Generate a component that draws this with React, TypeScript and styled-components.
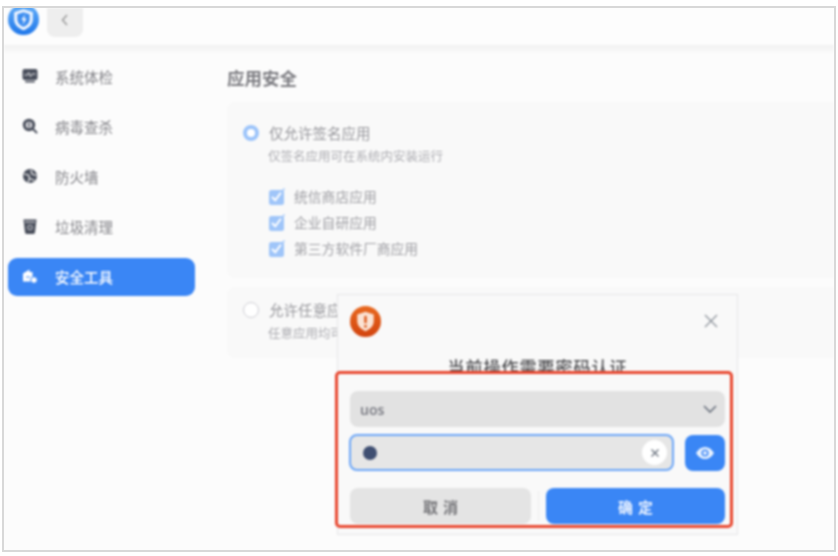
import React from "react";
import styled, { createGlobalStyle } from "styled-components";

const Global = createGlobalStyle`
  html, body { margin: 0; padding: 0; background: #fff; }
  body { width: 838px; height: 556px; overflow: hidden; font-family: "Noto Sans CJK SC", "Noto Sans", sans-serif; }
`;
const Page = styled.div`
  width: 838px; height: 556px; padding: 6px 2px 4px 2px; box-sizing: border-box;
`;
const Frame = styled.div`
  height: 100%; border: 2px solid #d8d8d8; box-sizing: border-box; background: #fdfdfd; overflow: hidden;
`;
const Shot = styled.div`
  position: relative; height: 100%; display: flex; flex-direction: column; filter: blur(0.85px);
`;
const TopBar = styled.div`
  height: 37px; flex: none; background: #fdfdfd; display: flex; align-items: flex-start; gap: 8px; padding-left: 4px;
`;
const Logo = styled.div`
  width: 31px; height: 31px; margin-top: -4px; flex: none;
`;
const BackBtn = styled.div`
  width: 36px; height: 29px; border-radius: 0 0 8px 8px; background: #eeeeee;
  display: flex; align-items: center; justify-content: center; padding-bottom: 6px; box-sizing: border-box;
`;
const Body = styled.div`
  flex: 1; display: flex; min-height: 0;
`;
const Side = styled.div`
  width: 201px; flex: none; background: linear-gradient(#f1f1f1 0, #fcfcfc 9px);
  padding: 13px 10px 0 4px; box-sizing: border-box; display: flex; flex-direction: column; gap: 12px;
`;
const Item = styled.div<{ $active?: boolean }>`
  height: 38px; border-radius: 9px; display: flex; align-items: center; padding: 0 0 2px 14px; box-sizing: border-box; gap: 17px;
  background: ${p => (p.$active ? "#3a86f5" : "transparent")};
  color: ${p => (p.$active ? "#ffffff" : "#85858a")};
  font-size: 14.5px; font-weight: ${p => (p.$active ? 500 : 400)};
`;
const Main = styled.div`
  flex: 1; background: linear-gradient(#f1f1f1 0, #fcfcfc 9px); padding: 21px 0 0 22px; min-width: 0;
`;
const Heading = styled.div`
  font-size: 17.500px; font-weight: 700; color: #7d7d82; line-height: 24px; padding-bottom: 2px; margin-bottom: 10px;
`;
const Card = styled.div<{ $h: number; $pad: number }>`
  height: ${p => p.$h}px; background: #f9f9f9; border-radius: 8px 0 0 8px; padding: ${p => p.$pad}px 0 0 16px;
  box-sizing: border-box; margin-bottom: 9px;
`;
const RadioRow = styled.div`
  display: flex; align-items: center; gap: 10px; color: #97979c; font-size: 14.500px; line-height: 20px;
`;
const Radio = styled.span<{ $on?: boolean }>`
  width: 16px; height: 16px; border-radius: 50%; box-sizing: border-box; flex: none; background: #fff;
  border: ${p => (p.$on ? "4px solid #9cc4fa" : "1.5px solid #cfcfd5")};
`;
const Sub = styled.div`
  font-size: 12.500px; color: #adadb2; margin: 5px 0 0 25px; line-height: 16px;
`;
const Checks = styled.div`
  margin: 22px 0 0 26px; display: flex; flex-direction: column; gap: 6px;
`;
const CheckRow = styled.div`
  display: flex; align-items: center; gap: 10px; color: #a0a0a5; font-size: 13.800px; line-height: 20px;
`;
const Box = styled.span`
  width: 16px; height: 17px; flex: none; display: block; margin-right: -1px;
`;
const Dialog = styled.div`
  position: absolute; left: 333px; top: 286px; width: 401px; height: 241px; background: #f9f9f9;
  border: 1px solid #e6e6e8; box-sizing: border-box; padding: 10px 19px 0 12px; display: flex; flex-direction: column;
`;
const DialogTop = styled.div`
  display: flex; justify-content: space-between; align-items: center; height: 32px;
`;
const DialogTitle = styled.div`
  font-size: 17px; font-weight: 500; color: #4f4f52; text-align: center; height: 20px; line-height: 20px;
  margin: 20px 0 0 0; letter-spacing: 1px; padding-left: 7px;
`;
const Highlight = styled.div`
  position: absolute; left: -3px; top: 76px; width: 398px; height: 157px; border: 3px solid #e8472f;
  border-radius: 5px; box-sizing: border-box; padding: 17px 5px 0 12px; display: flex; flex-direction: column; background: #f9f9f9;
  overflow: hidden;
`;
const Select = styled.div`
  height: 36px; flex: none; border-radius: 8px; background: #e2e2e2; display: flex; align-items: center; justify-content: space-between;
  padding: 0 7px 0 10px; color: #7f8088; font-size: 14px; font-weight: 600; font-family: "Noto Sans", sans-serif;
`;
const PassRow = styled.div`
  display: flex; gap: 11px; margin-top: 7px; margin-left: -1px;
`;
const PassInput = styled.div`
  flex: 1; height: 37px; box-sizing: border-box; border: 2px solid #6ba6f8; border-radius: 8px; background: #e6e6e6;
  display: flex; align-items: center; justify-content: space-between; padding: 0 5px 0 12px;
`;
const Dot = styled.span`
  width: 14px; height: 14px; border-radius: 50%; background: #3f4f72;
`;
const Clear = styled.span`
  width: 25px; height: 25px; border-radius: 50%; background: #fff; display: flex; align-items: center; justify-content: center;
`;
const EyeBtn = styled.div`
  width: 40px; height: 36px; margin-top: 1px; border-radius: 8px; background: #3a86f5; display: flex; align-items: center; justify-content: center;
`;
const Buttons = styled.div`
  display: flex; align-items: center; margin-top: 17px;
`;
const Btn = styled.div<{ $primary?: boolean }>`
  height: 36px; width: ${p => (p.$primary ? 179 : 181)}px; flex: none; border-radius: 8px;
  background: ${p => (p.$primary ? "#3a86f5" : "#e4e4e4")}; color: ${p => (p.$primary ? "#e8f1ff" : "#76767a")};
  display: flex; align-items: center; justify-content: center; font-size: 15px; font-weight: 600; letter-spacing: 5px; padding-left: 5px; box-sizing: border-box;
`;
const Divider = styled.span`
  width: 1px; height: 30px; background: #ececec; margin: 0 7px;
`;

const ShieldLogo = () => (
  <Logo>
    <svg width="31" height="31" viewBox="0 0 30 30">
      <defs>
        <linearGradient id="lg" x1="0" y1="0" x2="0" y2="1">
          <stop offset="0" stopColor="#63aef8" />
          <stop offset="1" stopColor="#1f77ea" />
        </linearGradient>
      </defs>
      <circle cx="15" cy="15" r="15" fill="url(#lg)" />
      <path d="M15 5l9 3v6.800c0 5.200-3.800 8.500-9 10.700-5.200-2.200-9-5.500-9-10.700V8z" fill="#f2f7ff" />
      <path d="M15 8l6 2v4.800c0 3.500-2.500 6-6 7.500-3.500-1.500-6-4-6-7.500V10z" fill="#3d8df0" />
      <path d="M16.500 10l-3.500 5.500h2.200l-1 4.500 3.800-6h-2.400z" fill="#fff" />
    </svg>
  </Logo>
);

const icons = {
  check: (c: string) => (
    <svg width="16" height="16" viewBox="0 0 16 16">
      <rect x=".5" y="1" width="15" height="11" rx="2" fill={c} />
      <rect x="3" y="12.800" width="10" height="1.800" rx=".8" fill={c} />
      <path d="M2.500 7h3l1.200-2.400 1.800 4L10 6h3.500" stroke="#e8e8ea" strokeWidth="1" fill="none" />
    </svg>
  ),
  scan: (c: string) => (
    <svg width="16" height="16" viewBox="0 0 16 16">
      <circle cx="7" cy="7" r="6.200" fill={c} />
      <circle cx="7" cy="7" r="3.300" fill="#d8d8dc" />
      <rect x="6.300" y="4.800" width="1.400" height="3" fill={c} />
      <circle cx="7" cy="9" r=".8" fill={c} />
      <path d="M11 11l3.500 3.500" stroke={c} strokeWidth="2" strokeLinecap="round" />
    </svg>
  ),
  fire: (c: string) => (
    <svg width="16" height="16" viewBox="0 0 16 16">
      <circle cx="8" cy="8" r="7" fill={c} />
      <path d="M2 6l4.500 1 1 3.500M9 2l1 4 4.500 1.500M6 14.500l1.500-4 5 2" stroke="#f4f4f4" strokeWidth="1.200" fill="none" />
    </svg>
  ),
  trash: (c: string) => (
    <svg width="16" height="17" viewBox="0 0 16 17">
      <path d="M1.500 1.500h13l-1.500 13a2 2 0 0 1-2 1.500H5a2 2 0 0 1-2-1.500z" fill={c} />
      <path d="M3 4h10" stroke="#e8e8ea" strokeWidth="1" />
      <circle cx="8" cy="9.500" r="2.200" fill="none" stroke="#b9bbc2" strokeWidth="1.100" />
    </svg>
  ),
  tools: (c: string) => (
    <svg width="16" height="17" viewBox="0 0 16 17">
      <path d="M1 5.500L7.500 1.500v2.500h3v9.500H1z" fill={c} />
      <path d="M4 9h4" stroke="#3a86f5" strokeWidth="1" />
      <circle cx="12" cy="12" r="3.300" fill={c} stroke="#3a86f5" strokeWidth="1" />
    </svg>
  ),
};

const nav: [keyof typeof icons, string][] = [
  ["check", "系统体检"],
  ["scan", "病毒查杀"],
  ["fire", "防火墙"],
  ["trash", "垃圾清理"],
];

const CheckBox = () => (
  <Box>
    <svg width="16" height="17" viewBox="0 0 16 17">
      <rect x="0" y="2" width="15" height="15" rx="2.500" fill="#9fc5f9" />
      <path d="M3 9l3.300 3.300L12 4.500" stroke="#fff" strokeWidth="2" fill="none" />
      <path d="M12 4.500L15.500 .5" stroke="#9fc5f9" strokeWidth="1.400" fill="none" />
    </svg>
  </Box>
);

export default function App() {
  return (
    <>
      <Global />
      <Page>
        <Frame>
          <Shot>
            <TopBar>
              <ShieldLogo />
              <BackBtn>
                <svg width="12" height="14" viewBox="0 0 12 14">
                  <path d="M8 2L3.500 7 8 12" stroke="#999" strokeWidth="1.500" fill="none" />
                </svg>
              </BackBtn>
            </TopBar>
            <Body>
              <Side>
                {nav.map(([k, t]) => (
                  <Item key={t}>
                    {icons[k]("#4a4f5c")}
                    <span>{t}</span>
                  </Item>
                ))}
                <Item $active>
                  {icons.tools("#ffffff")}
                  <span>安全工具</span>
                </Item>
              </Side>
              <Main>
                <Heading>应用安全</Heading>
                <Card $h={176} $pad={21}>
                  <RadioRow>
                    <Radio $on />
                    <span>仅允许签名应用</span>
                  </RadioRow>
                  <Sub>仅签名应用可在系统内安装运行</Sub>
                  <Checks>
                    <CheckRow><CheckBox /><span>统信商店应用</span></CheckRow>
                    <CheckRow><CheckBox /><span>企业自研应用</span></CheckRow>
                    <CheckRow><CheckBox /><span>第三方软件厂商应用</span></CheckRow>
                  </Checks>
                </Card>
                <Card $h={71} $pad={13}>
                  <RadioRow>
                    <Radio />
                    <span>允许任意应用</span>
                  </RadioRow>
                  <Sub>任意应用均可在系统内安装运行</Sub>
                </Card>
              </Main>
            </Body>
            <Dialog>
              <DialogTop>
                <svg width="31" height="31" viewBox="0 0 32 32">
                  <defs>
                    <linearGradient id="og" x1="0" y1="0" x2="0" y2="1">
                      <stop offset="0" stopColor="#e8681f" />
                      <stop offset="1" stopColor="#d2440f" />
                    </linearGradient>
                  </defs>
                  <circle cx="16" cy="16" r="16" fill="url(#og)" />
                  <path d="M16 6l8.500 2.800v6.700c0 5-3.400 8.200-8.500 10.500-5.100-2.300-8.500-5.500-8.500-10.500V8.800z" fill="#fbe3d4" />
                  <rect x="14.800" y="10" width="2.400" height="8" rx="1.200" fill="#d9500f" />
                  <circle cx="16" cy="21" r="1.400" fill="#d9500f" />
                </svg>
                <svg width="14" height="14" viewBox="0 0 14 14">
                  <path d="M1 1l12 12M13 1L1 13" stroke="#8f949c" strokeWidth="1.300" />
                </svg>
              </DialogTop>
              <DialogTitle>当前操作需要密码认证</DialogTitle>
              <Highlight>
                <Select>
                  <span>uos</span>
                  <svg width="16" height="10" viewBox="0 0 16 10">
                    <path d="M2 2l6 6 6-6" stroke="#6d7480" strokeWidth="1.700" fill="none" />
                  </svg>
                </Select>
                <PassRow>
                  <PassInput>
                    <Dot />
                    <Clear>
                      <svg width="10" height="10" viewBox="0 0 10 10">
                        <path d="M1.500 1.500l7 7M8.500 1.500l-7 7" stroke="#6d7480" strokeWidth="1.400" />
                      </svg>
                    </Clear>
                  </PassInput>
                  <EyeBtn>
                    <svg width="20" height="14" viewBox="0 0 20 14">
                      <path d="M1 7c2.500-4 5.500-6 9-6s6.500 2 9 6c-2.500 4-5.500 6-9 6s-6.500-2-9-6z" fill="#eaf3ff" />
                      <circle cx="10" cy="7" r="3.600" fill="#3a86f5" />
                      <circle cx="10" cy="7" r="2" fill="#eaf3ff" />
                    </svg>
                  </EyeBtn>
                </PassRow>
                <Buttons>
                  <Btn>取消</Btn>
                  <Divider />
                  <Btn $primary>确定</Btn>
                </Buttons>
              </Highlight>
            </Dialog>
          </Shot>
        </Frame>
      </Page>
    </>
  );
}
